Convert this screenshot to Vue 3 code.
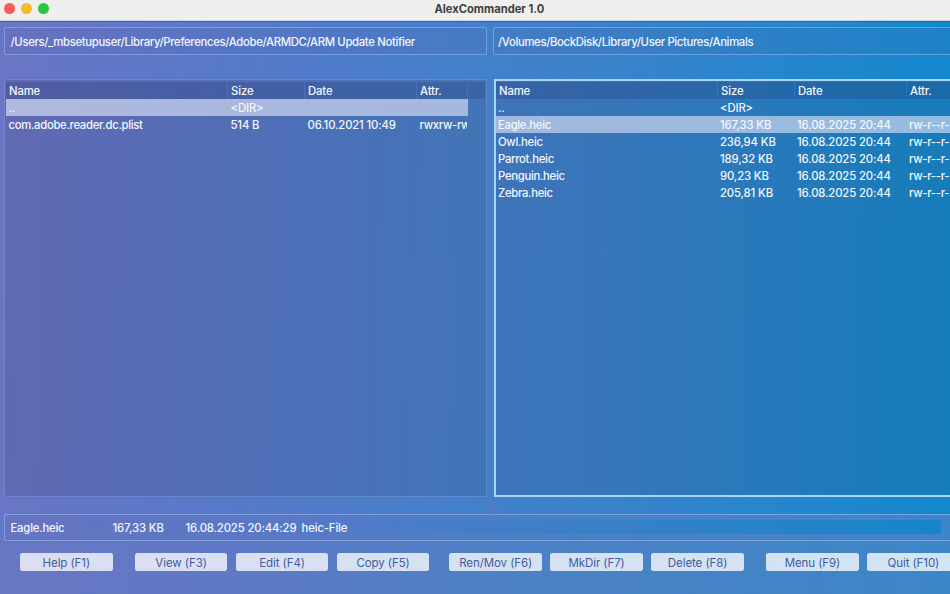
<script setup>
import { ref } from 'vue';

const panels = ref([
  {
    id: 'left',
    path: '/Users/_mbsetupuser/Library/Preferences/Adobe/ARMDC/ARM Update Notifier',
    selected: 0,
    files: [
      { name: '..', size: '<DIR>', date: '', attr: '' },
      { name: 'com.adobe.reader.dc.plist', size: '514 B', date: '06.10.2021 10:49', attr: 'rwxrw-rw' }
    ]
  },
  {
    id: 'right',
    path: '/Volumes/BockDisk/Library/User Pictures/Animals',
    selected: 1,
    files: [
      { name: '..', size: '<DIR>', date: '', attr: '' },
      { name: 'Eagle.heic', size: '167,33 KB', date: '16.08.2025 20:44', attr: 'rw-r--r-' },
      { name: 'Owl.heic', size: '236,94 KB', date: '16.08.2025 20:44', attr: 'rw-r--r-' },
      { name: 'Parrot.heic', size: '189,32 KB', date: '16.08.2025 20:44', attr: 'rw-r--r-' },
      { name: 'Penguin.heic', size: '90,23 KB', date: '16.08.2025 20:44', attr: 'rw-r--r-' },
      { name: 'Zebra.heic', size: '205,81 KB', date: '16.08.2025 20:44', attr: 'rw-r--r-' }
    ]
  }
]);

const active = ref('right');

const buttonGroups = [
  ['Help (F1)'],
  ['View (F3)', 'Edit (F4)', 'Copy (F5)'],
  ['Ren/Mov (F6)', 'MkDir (F7)', 'Delete (F8)'],
  ['Menu (F9)', 'Quit (F10)']
];

const select = (panel, index) => {
  active.value = panel.id;
  panel.selected = index;
};
</script>

<template>
  <div class="window">
    <header class="titlebar">
      <div class="lights">
        <span class="light close"></span>
        <span class="light minimize"></span>
        <span class="light zoom"></span>
      </div>
      <h1>AlexCommander 1.0</h1>
    </header>

    <main>
      <div class="paths">
        <div v-for="p in panels" :key="p.id" class="path" :class="p.id"><span>{{ p.path }}</span></div>
      </div>

      <div class="panels">
        <section v-for="p in panels" :key="p.id" class="panel" :class="[p.id, { active: active === p.id }]">
          <div class="row head">
            <span>Name</span><span>Size</span><span>Date</span><span>Attr.</span><span></span>
          </div>
          <div
            v-for="(f, i) in p.files"
            :key="f.name"
            class="row"
            :class="{ selected: p.selected === i }"
            @click="select(p, i)"
          >
            <span class="name">{{ f.name }}</span><span>{{ f.size }}</span><span>{{ f.date }}</span><span class="attr">{{ f.attr }}</span>
          </div>
        </section>
      </div>
    </main>

    <footer>
      <div class="status">
        <div class="status-inner">
          <span class="s-name">Eagle.heic</span>
          <span class="s-size">167,33 KB</span>
          <span class="s-date">16.08.2025 20:44:29</span>
          <span>heic-File</span>
        </div>
      </div>
      <div class="buttons">
        <div v-for="(group, g) in buttonGroups" :key="g" class="group">
          <button v-for="label in group" :key="label">{{ label }}</button>
        </div>
      </div>
      <span class="splitter"></span>
    </footer>
  </div>
</template>

<style>
body {
  margin: 0;
  overflow: hidden;
}
</style>

<style scoped>
.window {
  width: 950px;
  height: 594px;
  overflow: hidden;
  display: flex;
  flex-direction: column;
  font-family: Inter, "Liberation Sans", sans-serif;
  font-size: 11.3px;
  font-weight: 500;
  letter-spacing: -0.13px;
  color: #f3f6fd;
  background: linear-gradient(91deg, #6b75c5 0%, #5b78c9 19%, #477fcb 45%, #3a82ca 63%, #2586ce 82%, #1388cd 100%);
}

.titlebar {
  position: relative;
  flex: none;
  height: 21px;
  box-sizing: border-box;
  background: #efefee;
  border-bottom: 1px solid #c9d4e2;
}

.lights {
  display: flex;
  gap: 6.5px;
  padding: 3px 0 0 4px;
}

.light {
  width: 10.5px;
  height: 10.5px;
  border-radius: 50%;
}

.close { background: #f85e57; }
.minimize { background: #f8b92f; }
.zoom { background: #2ac840; }

h1 {
  position: absolute;
  top: 1px;
  left: 434.5px;
  margin: 0;
  font-size: 11.2px;
  line-height: 16px;
  font-weight: 700;
  letter-spacing: -0.02px;
  color: #3e3e3e;
  white-space: nowrap;
}

main {
  flex: none;
  height: 476px;
  border-top: 1px solid rgba(40, 80, 150, 0.5);
  box-sizing: border-box;
}

.paths {
  display: flex;
  gap: 6px;
  padding: 5px 0 0 4px;
}

.path {
  flex: none;
  width: 483px;
  height: 28px;
  box-sizing: border-box;
  border: 1px solid rgba(150, 190, 240, 0.55);
  border-radius: 2px;
  background: rgba(90, 90, 160, 0.12);
  padding-left: 5.5px;
  line-height: 29px;
  letter-spacing: -0.33px;
  white-space: nowrap;
}

.path.right {
  padding-left: 4px;
}

.panels {
  display: flex;
  gap: 7px;
  padding: 24px 0 0 4px;
}

.panel {
  flex: none;
  width: 483px;
  height: 418px;
  box-sizing: border-box;
  overflow: hidden;
  border: 1px solid rgba(140, 170, 230, 0.4);
  border-radius: 2px;
  padding: 2px 1px;
  background: linear-gradient(90deg, rgba(70, 75, 125, 0.25), rgba(60, 80, 125, 0.24));
}

.panel.right {
  background: linear-gradient(90deg, rgba(50, 75, 130, 0.24), rgba(28, 90, 130, 0.25));
}

.panel.active {
  width: 484px;
  border: 2px solid #a6d6f3;
  border-radius: 0;
  padding: 1px 0;
}

.row {
  display: grid;
  grid-template-columns: 222px 77px 112px 51px 17px;
  height: 17.1px;
  line-height: 18.5px;
  white-space: nowrap;
}

.row span {
  padding-left: 2.5px;
  overflow: hidden;
}

.row:not(.head) {
  width: 462px;
  cursor: default;
}

.row .name {
  letter-spacing: -0.3px;
}

.right .row {
  grid-template-columns: 222px 77px 112px 70px 17px;
  width: 479px;
}

.right .row span {
  padding-left: 2px;
}

.row.selected {
  background: linear-gradient(90deg, #b0b8dd, #a5b8df);
}

.right .row.selected {
  background: linear-gradient(90deg, #a3b8df, #93bde0);
}

.row .attr {
  margin-right: 1px;
  letter-spacing: -0.3px;
}

.row.head {
  height: 17px;
  line-height: 18px;
  background: rgba(35, 55, 115, 0.26);
}

.row.head span {
  padding-left: 3px;
  border-right: 1px solid rgba(130, 160, 225, 0.22);
  box-sizing: border-box;
}

.row.head span:last-child {
  border: 0;
}

footer {
  position: relative;
  flex: 1;
  padding-top: 17px;
}

/* lower end of the handle between the two panels */
.splitter {
  position: absolute;
  left: 489px;
  top: 3px;
  width: 6px;
  height: 19px;
  background: rgba(110, 110, 180, 0.25);
}

.status {
  margin-left: 4px;
  height: 27px;
  box-sizing: border-box;
  border: 1px solid rgba(160, 190, 240, 0.55);
  border-right: 0;
  border-radius: 2px 0 0 2px;
  padding: 5px 9px 6px 0;
  background: linear-gradient(90deg, #6775c3, #5a79c4 30%, #4b80c5 55%, #3f86c8);
}

.status-inner {
  display: flex;
  height: 14px;
  line-height: 16px;
  padding-left: 5.5px;
  white-space: nowrap;
  background: linear-gradient(90deg, #6773c1, #5679c7 30%, #407fc7 55%, #1685cb);
}

.s-name {
  width: 102px;
  letter-spacing: -0.2px;
}

.s-size { width: 73px; }
.s-date { width: 116px; }

/* strip under the status line is duller than the window gradient */
.buttons {
  display: flex;
  height: 53px;
  box-sizing: border-box;
  padding: 12px 0 0 20px;
  background: linear-gradient(96deg, #6977c3, #6078c5 22%, #4e80c5 50%, #3d87c7);
}

.group {
  display: flex;
  flex: none;
  gap: 8.4px;
  margin-right: 22.2px;
}

.group:nth-child(2) {
  margin-right: 20px;
}

button {
  flex: none;
  width: 92.6px;
  height: 17.6px;
  border: 0;
  border-radius: 2.5px;
  padding: 2px 0 0;
  font: 400 11.5px/16px Inter, "Liberation Sans", sans-serif;
  letter-spacing: -0.08px;
  color: #405e9d;
  background: rgba(255, 255, 255, 0.77);
}
</style>
